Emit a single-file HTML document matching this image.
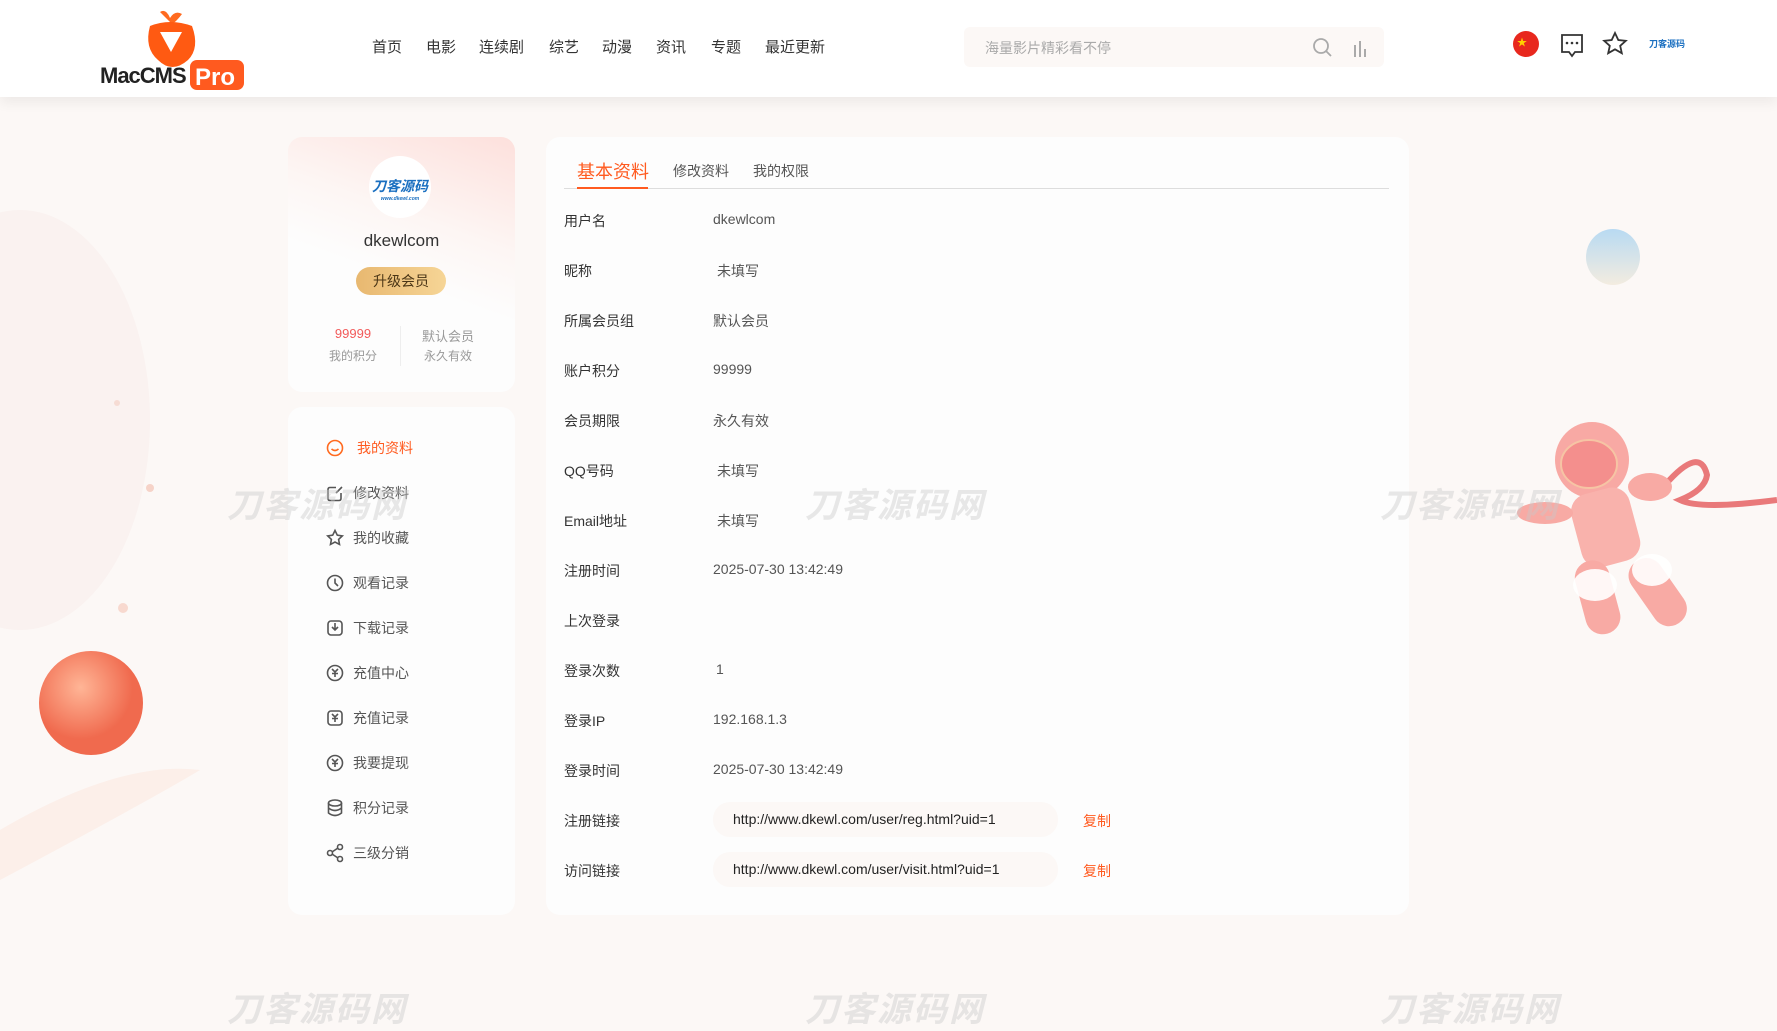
<!DOCTYPE html>
<html><head><meta charset="utf-8"><style>
*{margin:0;padding:0;box-sizing:border-box}
body{width:1777px;height:1008px;overflow:hidden;background:#fcf8f6;font-family:"Liberation Sans","Noto Sans CJK SC",sans-serif;position:relative;color:#333}
.abs{position:absolute}
.hdr{left:0;top:0;width:1777px;height:97px;background:#fff;box-shadow:0 6px 12px rgba(0,0,0,.06)}
.nav{top:36px;font-size:15px;color:#333;letter-spacing:0}
.wm{font-size:34px;font-weight:bold;font-style:italic;color:rgba(200,200,200,.42);letter-spacing:2px}
.card{background:#fdfdfd;border-radius:14px}
.row{left:564px;font-size:14px;color:#333}
.val{left:713px;font-size:14px;color:#555}
.mi{left:353px;font-size:14px;color:#555}
</style></head><body>
<svg class="abs" style="left:0;top:0" width="1777" height="1008">
<defs>
<radialGradient id="pl" cx="40%" cy="35%"><stop offset="0" stop-color="#ffb596"/><stop offset="1" stop-color="#f06a4e"/></radialGradient>
<linearGradient id="bl" x1="0" y1="0" x2="0" y2="1"><stop offset="0" stop-color="#b8daf2"/><stop offset="1" stop-color="#f3ece0"/></linearGradient>
</defs>
<ellipse cx="20" cy="420" rx="130" ry="210" fill="#f9ece8" opacity=".45"/>
<path d="M0 830 Q120 760 200 770 Q150 800 0 880Z" fill="#fbe6dc" opacity=".5"/>
<circle cx="91" cy="703" r="52" fill="url(#pl)"/>
<circle cx="150" cy="488" r="4" fill="#f6d3c8"/><circle cx="123" cy="608" r="5" fill="#f8d9cf"/><circle cx="117" cy="403" r="3" fill="#f6dcd4"/>
<ellipse cx="1613" cy="257" rx="27" ry="28" fill="url(#bl)"/>
<path d="M1665 485 Q1700 445 1707 475 Q1705 490 1680 500 Q1700 510 1777 500" fill="none" stroke="#e9797a" stroke-width="6"/>
<ellipse cx="1592" cy="460" rx="37" ry="38" fill="#f8a9a4"/>
<ellipse cx="1589" cy="464" rx="28" ry="24" fill="#f48f8d" stroke="#f6c4a4" stroke-width="2"/>
<rect x="1575" y="490" width="60" height="75" rx="18" fill="#f9b2ac" transform="rotate(-15 1605 525)"/>
<ellipse cx="1545" cy="513" rx="28" ry="11" fill="#f8aaa4"/>
<ellipse cx="1650" cy="487" rx="22" ry="14" fill="#f8aaa4"/>
<rect x="1580" y="560" width="35" height="75" rx="17" fill="#f8aaa4" transform="rotate(-15 1597 597)"/>
<rect x="1640" y="555" width="35" height="75" rx="17" fill="#f8aaa4" transform="rotate(-35 1657 592)"/>
<ellipse cx="1595" cy="585" rx="22" ry="16" fill="#fff" opacity=".9"/>
<ellipse cx="1652" cy="570" rx="20" ry="16" fill="#fff" opacity=".9"/>
</svg>
<div class="abs wm" style="left:227px;top:-18px">刀客源码网</div>
<div class="abs wm" style="left:1380px;top:-18px">刀客源码网</div>

<div class="abs hdr"></div>
<svg class="abs" style="left:100px;top:8px" width="146" height="82">
<path d="M60 4 Q66 0 70 10 Q75 2 82 6 Q76 14 72 16Z" fill="#ff6a1f"/>
<path d="M50 18 Q70 10 92 18 Q100 40 88 52 Q72 66 58 52 Q44 40 50 18Z" fill="#ff5a12"/>
<path d="M60 24 L82 24 L71 44Z" fill="#fff"/>
<text x="0" y="75" font-family="Liberation Sans" font-size="22" font-weight="bold" fill="#222" letter-spacing="-1">MacCMS</text>
<rect x="90" y="52" width="54" height="30" rx="7" fill="#ff5a1f"/>
<text x="95" y="77" font-family="Liberation Sans" font-size="24" font-weight="bold" fill="#fff">Pro</text>
</svg>
<div class="abs nav" style="left:372px">首页</div>
<div class="abs nav" style="left:426px">电影</div>
<div class="abs nav" style="left:479px">连续剧</div>
<div class="abs nav" style="left:549px">综艺</div>
<div class="abs nav" style="left:602px">动漫</div>
<div class="abs nav" style="left:656px">资讯</div>
<div class="abs nav" style="left:711px">专题</div>
<div class="abs nav" style="left:765px">最近更新</div>
<div class="abs" style="left:964px;top:27px;width:420px;height:40px;background:#fcf8f6;border-radius:6px"></div>
<div class="abs" style="left:985px;top:38px;font-size:14px;color:#aaa">海量影片精彩看不停</div>
<svg class="abs" style="left:1312px;top:37px" width="60" height="22"><circle cx="9" cy="9" r="7" fill="none" stroke="#aaa" stroke-width="1.8"/><path d="M14 14l5 5" stroke="#aaa" stroke-width="1.8"/><path d="M43 8v12M48 4v16M53 12v8" stroke="#aaa" stroke-width="2"/></svg>
<svg class="abs" style="left:1511px;top:31px" width="190" height="30">
<circle cx="15" cy="13" r="13" fill="#e8281e"/><text x="6" y="15" font-size="10" fill="#ffd200">★</text>
<path d="M51 4h20v17h-7l-3 4-3-4h-7Z" fill="none" stroke="#333" stroke-width="1.8"/><circle cx="56" cy="12" r="1.3" fill="#333"/><circle cx="61" cy="12" r="1.3" fill="#333"/><circle cx="66" cy="12" r="1.3" fill="#333"/>
<path d="M104 2l3.3 7 7.5.8-5.6 5 1.6 7.4-6.8-3.9-6.8 3.9 1.6-7.4-5.6-5 7.5-.8Z" fill="none" stroke="#333" stroke-width="1.8"/>
<text x="138" y="16" font-size="9" font-weight="bold" fill="#1a6fc0">刀客源码</text>
</svg>

<div class="abs card" style="left:288px;top:137px;width:227px;height:255px;background:linear-gradient(200deg,#fde0dc 0%,#fdf6f4 35%,#fdfdfd 55%)"></div>
<div class="abs" style="left:369px;top:156px;width:62px;height:62px;border-radius:50%;background:#fff;text-align:center;padding-top:20px;font-size:14px;font-weight:bold;font-style:italic;color:#1a6fc0">刀客源码<div style="font-size:5px;color:#1a6fc0">www.dkewl.com</div></div>
<div class="abs" style="left:288px;top:231px;width:227px;text-align:center;font-size:17px;color:#333">dkewlcom</div>
<div class="abs" style="left:356px;top:267px;width:90px;height:28px;border-radius:14px;background:linear-gradient(90deg,#e8b870,#f6d596);text-align:center;line-height:28px;font-size:14px;color:#4a3515">升级会员</div>
<div class="abs" style="left:323px;top:326px;width:60px;text-align:center;font-size:13px;color:#f25a5a">99999</div>
<div class="abs" style="left:323px;top:347px;width:60px;text-align:center;font-size:12px;color:#999">我的积分</div>
<div class="abs" style="left:400px;top:326px;width:1px;height:40px;background:#eee"></div>
<div class="abs" style="left:418px;top:326px;width:60px;text-align:center;font-size:13px;color:#999">默认会员</div>
<div class="abs" style="left:418px;top:347px;width:60px;text-align:center;font-size:12px;color:#999">永久有效</div>

<div class="abs card" style="left:288px;top:407px;width:227px;height:508px"></div>
<svg class="abs" style="left:326px;top:439px" width="22" height="440" fill="none" stroke="#555" stroke-width="1.6">
<g><circle cx="9" cy="9" r="7.5" stroke="#ff6a1f"/><path d="M5.5 10q3.5 3 7 0" stroke="#ff6a1f"/></g>
<g transform="translate(0 45)"><path d="M15 9v5.5q0 2-2 2h-9q-2 0-2-2v-9q0-2 2-2h6M16 3l-6 6"/></g>
<g transform="translate(0 90)"><path d="M9 1.5l2.3 4.7 5 .7-3.7 3.5.9 5-4.5-2.4-4.5 2.4.9-5-3.7-3.5 5-.7Z"/></g>
<g transform="translate(0 135)"><circle cx="9" cy="9" r="7.5"/><path d="M9 4.5v4.5l3 3"/></g>
<g transform="translate(0 180)"><rect x="2" y="2" width="14" height="14" rx="3"/><path d="M9 4v7M6 8l3 3 3-3"/></g>
<g transform="translate(0 225)"><circle cx="9" cy="9" r="7.5"/><path d="M6 5l3 3 3-3M9 8v5M6 9.5h6"/></g>
<g transform="translate(0 270)"><rect x="2" y="2" width="14" height="14" rx="3"/><path d="M6 5l3 3 3-3M9 8v5M6 9.5h6"/></g>
<g transform="translate(0 315)"><circle cx="9" cy="9" r="7.5"/><path d="M6 5l3 3 3-3M9 8v5M6 9.5h6"/></g>
<g transform="translate(0 360)"><ellipse cx="9" cy="4" rx="6.5" ry="3"/><path d="M2.5 4v10q6.5 5 13 0v-10M2.5 9q6.5 5 13 0"/></g>
<g transform="translate(0 405)"><circle cx="4" cy="9" r="2.5"/><circle cx="14" cy="3" r="2.5"/><circle cx="14" cy="15" r="2.5"/><path d="M6 8l6-4M6 10l6 4"/></g>
</svg>
<div class="abs mi" style="left:357px;top:438px;color:#ff5a1f">我的资料</div>
<div class="abs mi" style="top:483px">修改资料</div>
<div class="abs mi" style="top:528px">我的收藏</div>
<div class="abs mi" style="top:573px">观看记录</div>
<div class="abs mi" style="top:618px">下载记录</div>
<div class="abs mi" style="top:663px">充值中心</div>
<div class="abs mi" style="top:708px">充值记录</div>
<div class="abs mi" style="top:753px">我要提现</div>
<div class="abs mi" style="top:798px">积分记录</div>
<div class="abs mi" style="top:843px">三级分销</div>

<div class="abs card" style="left:546px;top:137px;width:863px;height:778px"></div>
<div class="abs" style="left:577px;top:158px;font-size:18px;color:#ff5a1f">基本资料</div>
<div class="abs" style="left:673px;top:161px;font-size:14px;color:#555">修改资料</div>
<div class="abs" style="left:753px;top:161px;font-size:14px;color:#555">我的权限</div>
<div class="abs" style="left:564px;top:188px;width:825px;height:1px;background:#ddd"></div>
<div class="abs" style="left:577px;top:187px;width:71px;height:2px;background:#ff5a1f"></div>

<div class="abs row" style="top:211px">用户名</div><div class="abs val" style="top:211px">dkewlcom</div>
<div class="abs row" style="top:261px">昵称</div><div class="abs val" style="top:261px;left:717px">未填写</div>
<div class="abs row" style="top:311px">所属会员组</div><div class="abs val" style="top:311px">默认会员</div>
<div class="abs row" style="top:361px">账户积分</div><div class="abs val" style="top:361px">99999</div>
<div class="abs row" style="top:411px">会员期限</div><div class="abs val" style="top:411px">永久有效</div>
<div class="abs row" style="top:461px">QQ号码</div><div class="abs val" style="top:461px;left:717px">未填写</div>
<div class="abs row" style="top:511px">Email地址</div><div class="abs val" style="top:511px;left:717px">未填写</div>
<div class="abs row" style="top:561px">注册时间</div><div class="abs val" style="top:561px">2025-07-30 13:42:49</div>
<div class="abs row" style="top:611px">上次登录</div>
<div class="abs row" style="top:661px">登录次数</div><div class="abs val" style="top:661px;left:716px">1</div>
<div class="abs row" style="top:711px">登录IP</div><div class="abs val" style="top:711px">192.168.1.3</div>
<div class="abs row" style="top:761px">登录时间</div><div class="abs val" style="top:761px">2025-07-30 13:42:49</div>
<div class="abs row" style="top:811px">注册链接</div>
<div class="abs" style="left:713px;top:802px;width:345px;height:35px;border-radius:17px;background:#fcf8f6;padding:9px 0 0 20px;font-size:14px;color:#222">http://www.dkewl.com/user/reg.html?uid=1</div>
<div class="abs" style="left:1083px;top:811px;font-size:14px;color:#ff5a1f">复制</div>
<div class="abs row" style="top:861px">访问链接</div>
<div class="abs" style="left:713px;top:852px;width:345px;height:35px;border-radius:17px;background:#fcf8f6;padding:9px 0 0 20px;font-size:14px;color:#222">http://www.dkewl.com/user/visit.html?uid=1</div>
<div class="abs" style="left:1083px;top:861px;font-size:14px;color:#ff5a1f">复制</div>

<div class="abs wm" style="left:227px;top:478px">刀客源码网</div>
<div class="abs wm" style="left:805px;top:478px">刀客源码网</div>
<div class="abs wm" style="left:1380px;top:478px">刀客源码网</div>
<div class="abs wm" style="left:227px;top:982px">刀客源码网</div>
<div class="abs wm" style="left:805px;top:982px">刀客源码网</div>
<div class="abs wm" style="left:1380px;top:982px">刀客源码网</div>
</body></html>
